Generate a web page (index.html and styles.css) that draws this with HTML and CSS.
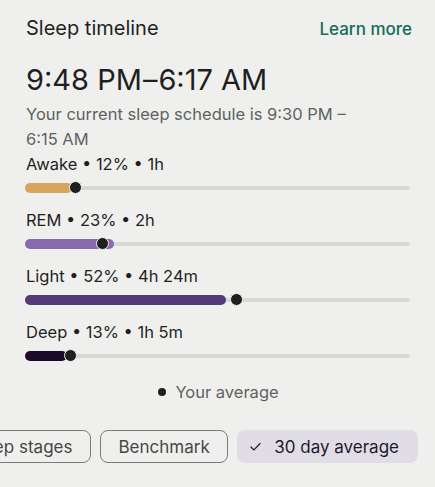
FILE: index.html
```html
<!DOCTYPE html>
<html lang="en">
<head>
<meta charset="utf-8">
<title>Sleep timeline</title>
<link rel="stylesheet" href="styles.css">
</head>
<body>
<main class="card">
  <header class="head">
    <h2 class="title">Sleep timeline</h2>
    <a class="learn" href="#">Learn more</a>
  </header>
  <div class="range">9:48 PM<span class="dash">–</span>6:17 AM</div>
  <p class="sched">Your current sleep schedule is 9:30 PM –<br>6:15 AM</p>

  <section class="stages">
    <div class="stage">
      <div class="label">Awake • 12% • 1h</div>
      <div class="bar">
        <div class="fill awake" style="width:12.2%"></div>
        <span class="dot" style="left:13%"></span>
      </div>
    </div>
    <div class="stage">
      <div class="label">REM • 23% • 2h</div>
      <div class="bar">
        <div class="fill rem" style="width:23.1%"></div>
        <span class="dot" style="left:20%"></span>
      </div>
    </div>
    <div class="stage">
      <div class="label">Light • 52% • 4h 24m</div>
      <div class="bar">
        <div class="fill light" style="width:52.2%"></div>
        <span class="dot" style="left:54.9%"></span>
      </div>
    </div>
    <div class="stage">
      <div class="label">Deep • 13% • 1h 5m</div>
      <div class="bar">
        <div class="fill deep" style="width:11%"></div>
        <span class="dot" style="left:11.9%"></span>
      </div>
    </div>
  </section>

  <div class="legend"><span class="legend-dot"></span>Your average</div>

  <div class="chips-wrap">
    <div class="chips">
      <button class="chip">Sleep stages</button>
      <button class="chip">Benchmark</button>
      <button class="chip selected">
        <svg class="check" viewBox="0 0 24 24" width="13" height="13" aria-hidden="true"><path d="M3 12.5l6 6L21 6" fill="none" stroke="currentColor" stroke-width="2.2"/></svg>
        30 day average
      </button>
    </div>
  </div>
</main>
</body>
</html>
```

FILE: styles.css
```css
* { box-sizing: border-box; }
html, body { margin: 0; padding: 0; }
body {
  background: #eff0ee;
  font-family: Inter, Roboto, "Noto Sans", "Liberation Sans", sans-serif;
  color: #1f1f1f;
  width: 435px;
  height: 487px;
  overflow: hidden;
}
.card {
  padding: 15px 0 0 0;
}
.head {
  display: flex;
  justify-content: space-between;
  align-items: baseline;
  padding: 0 23px 0 26px;
}
.title {
  margin: 0;
  font-size: 20px;
  font-weight: 400;
  line-height: 26px;
  color: #1f1f1f;
}
.learn {
  font-size: 17px;
  color: #146c5a;
  text-decoration: none;
  font-weight: 500;
}
.range {
  margin: 21px 0 0 0;
  padding: 0 26px;
  font-size: 29px;
  line-height: 36px;
  color: #1f1f1f;
}
.dash {
  padding: 0 1px;
}
.sched {
  margin: 4px 0 0 0;
  padding: 0 26px;
  font-size: 16.5px;
  line-height: 25px;
  color: #5e625f;
}
.stages {
  padding: 0 25px;
  display: flex;
  flex-direction: column;
  gap: 15px;
}
.stage {
  display: flex;
  flex-direction: column;
  gap: 6px;
}
.label {
  padding-left: 1px;
  font-size: 16.5px;
  line-height: 24px;
  color: #1f1f1f;
}
.bar {
  position: relative;
  width: 385px;
  height: 11px;
  display: flex;
  align-items: center;
}
.bar::before {
  content: "";
  position: absolute;
  left: 0;
  right: 0;
  top: 4px;
  height: 4px;
  border-radius: 2px;
  background: #d8d9d7;
}
.fill {
  position: relative;
  height: 10px;
  border-radius: 5px;
}
.awake { background: #d6a65c; }
.rem { background: #8a6aae; }
.light { background: #533a78; }
.deep { background: #1b0a2a; }
.dot {
  position: absolute;
  top: 50%;
  width: 13px;
  height: 13px;
  margin: -6.5px 0 0 -6.5px;
  border-radius: 50%;
  background: #1f1f1f;
  border: 1.5px solid #eff0ee;
}
.legend {
  margin-top: 19px;
  display: flex;
  justify-content: center;
  align-items: center;
  gap: 9px;
  font-size: 16.5px;
  line-height: 24px;
  color: #5e625f;
  padding-left: 2px;
}
.legend-dot {
  width: 8px;
  height: 8px;
  border-radius: 50%;
  background: #1f1f1f;
}
.chips-wrap {
  margin-top: 26px;
  overflow: hidden;
  display: flex;
  justify-content: flex-end;
  padding-right: 17px;
}
.chips {
  display: flex;
  gap: 9px;
  flex-shrink: 0;
}
.chip {
  flex-shrink: 0;
  height: 33px;
  padding: 0 17.5px;
  border: 1px solid #7b7c7a;
  border-radius: 8px;
  background: transparent;
  font-family: inherit;
  font-size: 17px;
  color: #454845;
  display: flex;
  align-items: center;
  gap: 12px;
}
.chip.selected {
  border-color: transparent;
  background: #e1dde6;
  color: #1e1a2c;
  padding: 0 18px 0 11px;
}
.check { color: #1e1a2c; }
```
